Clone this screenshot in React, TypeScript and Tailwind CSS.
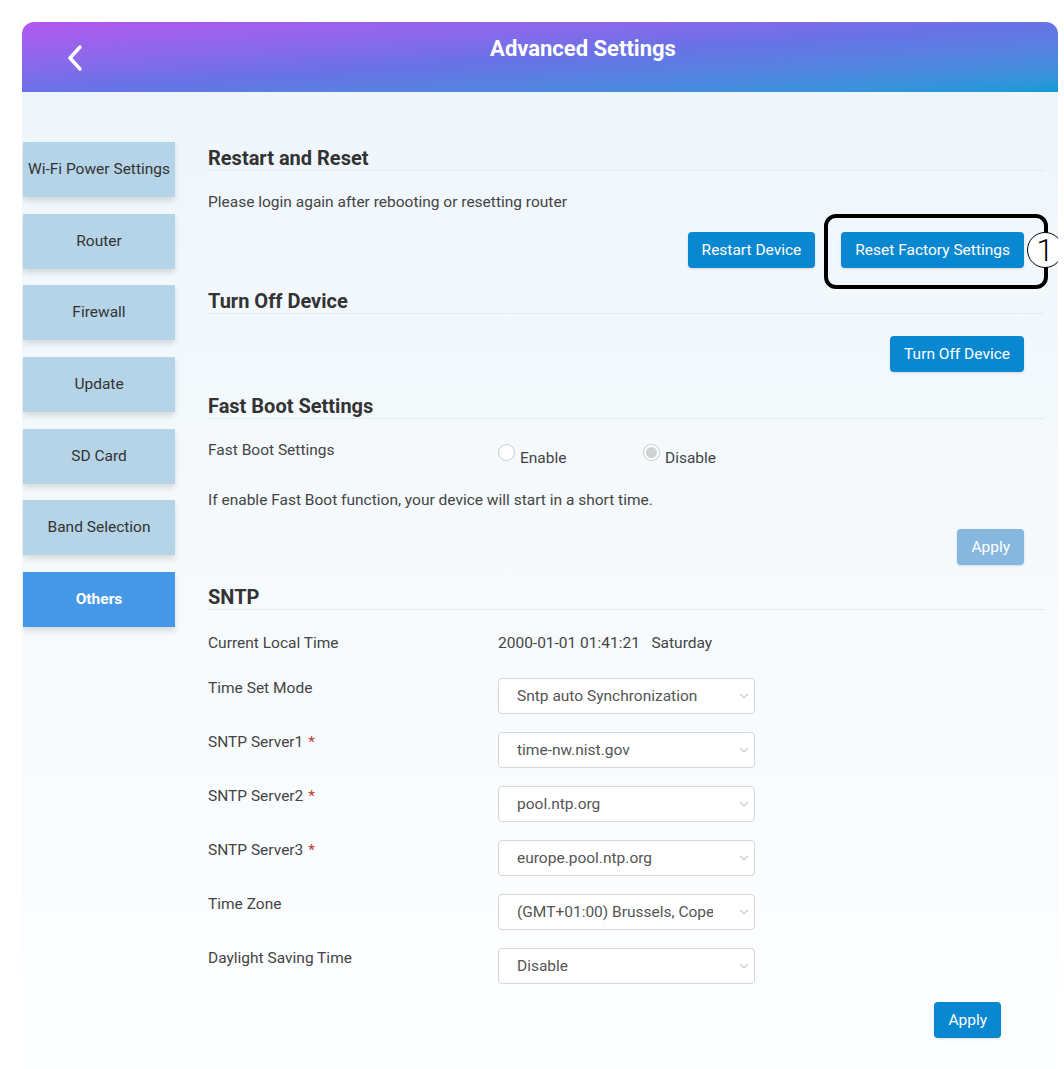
import { ChevronDown } from "lucide-react";

const menu = [
  "Wi-Fi Power Settings",
  "Router",
  "Firewall",
  "Update",
  "SD Card",
  "Band Selection",
  "Others",
];

const sntpRows = [
  { label: "Time Set Mode", value: "Sntp auto Synchronization" },
  { label: "SNTP Server1", value: "time-nw.nist.gov", required: true },
  { label: "SNTP Server2", value: "pool.ntp.org", required: true },
  { label: "SNTP Server3", value: "europe.pool.ntp.org", required: true },
  { label: "Time Zone", value: "(GMT+01:00) Brussels, Copenhagen" },
  { label: "Daylight Saving Time", value: "Disable" },
];

function SectionTitle({ children }: { children: string }) {
  return (
    <h2 className="border-b border-[#e6ebef] text-[20px] font-bold leading-[24px] text-[#333]">
      {children}
    </h2>
  );
}

function BlueButton({
  children,
  disabled = false,
}: {
  children: string;
  disabled?: boolean;
}) {
  return (
    <button
      className={`h-9 rounded px-[14px] text-[15.5px] text-white shadow-sm ${
        disabled ? "bg-[#86b7de]" : "bg-[#0a87d1]"
      }`}
    >
      {children}
    </button>
  );
}

function Select({ value }: { value: string }) {
  return (
    <div className="flex h-9 w-[257px] items-center rounded border border-[#d4d6d8] bg-white pl-[18px] pr-[3px] text-[15.5px] text-[#555]">
      <span className="mr-[24px] flex-1 overflow-hidden whitespace-nowrap">{value}</span>
      <ChevronDown className="h-[14px] w-[14px] text-[#9a9a9a]" strokeWidth={1.5} />
    </div>
  );
}

function Radio({ label, checked = false }: { label: string; checked?: boolean }) {
  return (
    <label className="flex w-[145px] items-center gap-[5px] text-[#444]">
      <span className="mb-[4px] flex h-[17px] w-[17px] items-center justify-center rounded-full border border-[#c9cbcd] bg-white">
        {checked && <span className="h-[11px] w-[11px] rounded-full bg-[#cfd1d3]" />}
      </span>
      <span className="mt-[8px]">{label}</span>
    </label>
  );
}

export default function App() {
  return (
    <div className="min-h-[1069px] bg-white pl-[22px] pr-[6px] pt-[22px] font-['Roboto',sans-serif]">
      <div className="overflow-hidden rounded-t-xl">
        {/* Header bar */}
        <div className="flex h-[70px] bg-linear-to-br from-[#b257f0] via-[#6872e6] to-[#0a9bd8] text-white">
          <div className="flex w-[86px] items-center justify-center pl-[20px] pt-[2px]">
            <svg width="20" height="28" viewBox="0 0 20 28" fill="none">
              <path
                d="M15 3 L5 14 L15 25"
                stroke="white"
                strokeWidth="3.5"
                strokeLinecap="round"
                strokeLinejoin="round"
              />
            </svg>
          </div>
          <h1 className="flex-1 pt-[14px] text-center text-[22px] font-bold leading-[26px]">
            Advanced Settings
          </h1>
        </div>

        {/* Body */}
        <div className="flex min-h-[977px] bg-linear-to-b from-[#eff6fb] to-[#fdfeff] pr-[13px]">
          <nav className="mt-[50px] flex w-[153px] flex-col gap-[16.67px] pl-px">
            {menu.map((item) => (
              <div
                key={item}
                className={`flex h-[55px] items-center justify-center text-[15.5px] shadow-[0_4px_6px_rgba(0,0,0,0.12)] ${
                  item === "Others"
                    ? "bg-[#4498e7] font-bold text-white"
                    : "bg-[#b5d4e7] text-[#333]"
                }`}
              >
                {item}
              </div>
            ))}
          </nav>

          <main className="ml-[33px] flex-1 pt-[54px] text-[15.5px] leading-[20px] text-[#444]">
            {/* Restart and Reset */}
            <SectionTitle>Restart and Reset</SectionTitle>
            <p className="mt-[21px]">Please login again after rebooting or resetting router</p>
            <div className="mt-[20px] flex justify-end gap-[26px] pr-[21px]">
              <BlueButton>Restart Device</BlueButton>
              <div className="relative">
                <BlueButton>Reset Factory Settings</BlueButton>
                <div className="pointer-events-none absolute -bottom-[21px] -left-[17px] -right-[24px] -top-[18px] rounded-[12px] border-[4px] border-black" />
                <div className="absolute -right-[39px] top-0 flex h-9 w-9 items-center justify-center rounded-full border-[1.5px] border-black bg-white text-[31px] font-light leading-none text-black">
                  1
                </div>
              </div>
            </div>

            {/* Turn Off Device */}
            <div className="mt-[21px]">
              <SectionTitle>Turn Off Device</SectionTitle>
            </div>
            <div className="mt-[22px] flex justify-end pr-[21px]">
              <BlueButton>Turn Off Device</BlueButton>
            </div>

            {/* Fast Boot Settings */}
            <div className="mt-[22px]">
              <SectionTitle>Fast Boot Settings</SectionTitle>
            </div>
            <div className="mt-[21px] flex">
              <span className="w-[290px]">Fast Boot Settings</span>
              <div className="flex">
                <Radio label="Enable" />
                <Radio label="Disable" checked />
              </div>
            </div>
            <p className="mt-[22px]">
              If enable Fast Boot function, your device will start in a short time.
            </p>
            <div className="mt-[19px] flex justify-end pr-[21px]">
              <BlueButton disabled>Apply</BlueButton>
            </div>

            {/* SNTP */}
            <div className="mt-[20px]">
              <SectionTitle>SNTP</SectionTitle>
            </div>
            <div className="mt-[23px] flex">
              <span className="w-[290px]">Current Local Time</span>
              <span className="whitespace-pre">2000-01-01 01:41:21   Saturday</span>
            </div>
            <div className="mt-[25px] flex flex-col gap-[18px]">
              {sntpRows.map((row) => (
                <div key={row.label} className="flex">
                  <span className="w-[290px]">
                    {row.label}
                    {row.required && <span className="ml-[5px] text-[#c0392b]">*</span>}
                  </span>
                  <Select value={row.value} />
                </div>
              ))}
            </div>
            <div className="mt-[18px] flex justify-end pr-[44px]">
              <BlueButton>Apply</BlueButton>
            </div>
          </main>
        </div>
      </div>
    </div>
  );
}
